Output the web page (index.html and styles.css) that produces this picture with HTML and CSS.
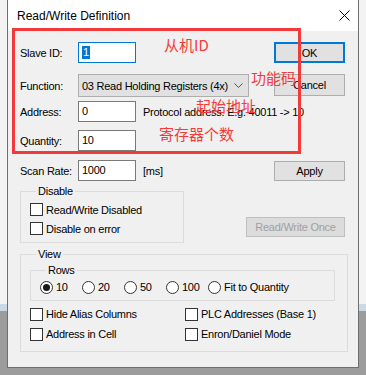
FILE: index.html
```html
<!DOCTYPE html>
<html lang="en">

<head>
    <meta charset="UTF-8">
    <title>Read/Write Definition</title>
    <link rel="stylesheet" href="styles.css">
</head>

<body>

    <div class="dialog">
        <!-- title bar -->
        <div class="titlebar">
            <span class="title">Read/Write Definition</span>
            <svg class="close" width="11" height="11" viewBox="0 0 11 11">
                <path d="M0.5 0.5 L10.5 10.5 M10.5 0.5 L0.5 10.5" stroke="#000" stroke-width="1" fill="none" />
            </svg>
        </div>

        <div class="dialog-body">
            <div class="row row-slave">
                <span class="lbl">Slave ID:</span>
                <div class="field focus"><span class="selected">1</span></div>
                <div class="spacer"></div>
                <button class="btn btn-default">OK</button>
            </div>

            <div class="row row-func">
                <span class="lbl">Function:</span>
                <div class="select">
                    <span>03 Read Holding Registers (4x)</span>
                    <svg class="chevron" width="9" height="6" viewBox="0 0 9 6">
                        <path d="M0.5 0.5 L4.5 4.5 L8.5 0.5" stroke="#555" stroke-width="1" fill="none" />
                    </svg>
                </div>
                <div class="spacer"></div>
                <button class="btn btn-cancel">Cancel</button>
            </div>

            <div class="row row-addr">
                <span class="lbl">Address:</span>
                <div class="field">0</div>
                <span class="hint">Protocol address. E.g. 40011 -&gt; 10</span>
            </div>

            <div class="row row-qty">
                <span class="lbl">Quantity:</span>
                <div class="field">10</div>
            </div>

            <div class="row row-scan">
                <span class="lbl">Scan Rate:</span>
                <div class="field">1000</div>
                <span class="hint">[ms]</span>
                <div class="spacer"></div>
                <button class="btn btn-apply">Apply</button>
            </div>

            <div class="row row-disable">
                <fieldset class="group group-disable">
                    <legend>Disable</legend>
                    <div class="check"><span class="box"></span>Read/Write Disabled</div>
                    <div class="check"><span class="box"></span>Disable on error</div>
                </fieldset>
                <div class="spacer"></div>
                <button class="btn btn-once" disabled>Read/Write Once</button>
            </div>

            <fieldset class="group group-view">
                <legend>View</legend>
                <fieldset class="group group-rows">
                    <legend>Rows</legend>
                    <div class="radios">
                        <div class="radio on"><span class="dot"></span>10</div>
                        <div class="radio"><span class="dot"></span>20</div>
                        <div class="radio"><span class="dot"></span>50</div>
                        <div class="radio"><span class="dot"></span>100</div>
                        <div class="radio"><span class="dot"></span>Fit to Quantity</div>
                    </div>
                </fieldset>
                <div class="options">
                    <div class="check"><span class="box"></span>Hide Alias Columns</div>
                    <div class="check"><span class="box"></span>PLC Addresses (Base 1)</div>
                    <div class="check"><span class="box"></span>Address in Cell</div>
                    <div class="check"><span class="box"></span>Enron/Daniel Mode</div>
                </div>
            </fieldset>
        </div>

        <!-- red annotations drawn over the dialog -->
        <div class="mark"></div>
        <span class="note note-id">从机ID</span>
        <span class="note note-func">功能码</span>
        <span class="note note-addr">起始地址</span>
        <span class="note note-qty">寄存器个数</span>
    </div>

</body>

</html>
```

FILE: styles.css
```css
body {
    margin: 0;
    width: 366px;
    height: 375px;
    overflow: hidden;
    font-family: "Liberation Sans", Arial, sans-serif;
    font-size: 11px;
    letter-spacing: -0.25px;
    color: #000;
    background: linear-gradient(#f3f3f3 0 304px, #cbd8e6 304px 311px, #9c9c9c 311px);
}

/* dialog window */
.dialog {
    position: relative;
    box-sizing: border-box;
    width: 352px;
    height: 368px;
    margin-left: 7px;
    background: #f0f0f0;
    border: 1px solid #6f6f6f;
    border-top: none;
}

.titlebar {
    display: flex;
    align-items: center;
    height: 31px;
    padding: 0 7px 0 9px;
    background: #fff;
}

.title {
    font-size: 12px;
    letter-spacing: 0;
    flex: 1;
    padding-top: 1px;
}

.close {
    display: block;
    margin-right: 1px;
}

.dialog-body {
    padding: 11px 13px 0 12px;
}

/* form rows */
.row {
    display: flex;
    align-items: center;
}

.spacer {
    flex: 1;
}

.lbl {
    width: 58px;
}

.row-slave {
    height: 21px;
}

.row-func {
    height: 23px;
    margin-top: 11px;
}

.row-addr {
    height: 21px;
    margin-top: 4px;
}

.row-qty {
    height: 21px;
    margin-top: 8px;
}

.row-scan {
    height: 21px;
    margin-top: 9px;
}

.field {
    box-sizing: border-box;
    width: 58px;
    height: 21px;
    padding: 3px 0 0 3px;
    background: #fff;
    border: 1px solid #7a7a7a;
    line-height: 13px;
}

.field.focus {
    border-color: #0078d7;
}

.selected {
    display: inline-block;
    padding: 0 1px;
    background: #0078d7;
    color: #fff;
}

.hint {
    margin-left: 7px;
    white-space: nowrap;
}

.select {
    box-sizing: border-box;
    display: flex;
    align-items: center;
    justify-content: space-between;
    width: 171px;
    height: 23px;
    padding: 0 5px 0 3px;
    white-space: nowrap;
    background: #e1e1e1;
    border: 1px solid #adadad;
}

.chevron {
    display: block;
    flex-shrink: 0;
}

/* buttons */
.btn {
    box-sizing: border-box;
    width: 71px;
    height: 21px;
    padding: 0;
    font: inherit;
    letter-spacing: inherit;
    color: #000;
    background: #e1e1e1;
    border: 1px solid #adadad;
}

.btn-default {
    border: 2px solid #0078d7;
}

.btn-cancel {
    height: 22px;
    align-self: flex-start;
}

.btn-apply {
    height: 20px;
}

.btn-once {
    width: 99px;
    height: 20px;
    align-self: flex-end;
    margin-bottom: 6px;
    color: #a0a0a0;
    background: #dcdcdc;
    border-color: #bfbfbf;
}

/* group boxes */
.group {
    margin: 0;
    padding: 0;
    border: 1px solid #dcdcdc;
}

.group legend {
    margin-left: 6px;
    padding: 0 2px;
    line-height: 13px;
}

.row-disable {
    margin-top: 4px;
}

.group-disable {
    width: 164px;
    box-sizing: border-box;
    padding: 2px 0 4px 9px;
}

.group-view {
    box-sizing: border-box;
    width: 328px;
    margin-top: 5px;
    padding: 3px 0 7px 9px;
}

.group-rows {
    box-sizing: border-box;
    width: 305px;
    padding: 1px 0 4px 9px;
}

.check {
    display: flex;
    align-items: center;
    height: 19px;
    white-space: nowrap;
}

.box {
    box-sizing: border-box;
    width: 13px;
    height: 13px;
    margin-right: 3px;
    background: #fff;
    border: 1px solid #333;
}

.radios {
    display: flex;
    height: 18px;
    align-items: center;
}

.radio {
    display: flex;
    align-items: center;
    width: 42px;
}

.radio:last-child {
    width: auto;
}

.dot {
    box-sizing: border-box;
    display: flex;
    align-items: center;
    justify-content: center;
    width: 13px;
    height: 13px;
    margin-right: 3px;
    background: #fff;
    border: 1px solid #333;
    border-radius: 50%;
}

.radio.on .dot::after {
    content: "";
    width: 7px;
    height: 7px;
    border-radius: 50%;
    background: #1a1a1a;
}

.options {
    display: grid;
    grid-template-columns: 155px 1fr;
    margin-top: 3px;
}

.options .check {
    height: 20px;
}

/* red annotations */
.mark {
    position: absolute;
    left: 4px;
    top: 28px;
    width: 289px;
    height: 126px;
    box-sizing: border-box;
    border: 3px solid #f23a3a;
}

.note {
    position: absolute;
    font-family: "Noto Sans CJK SC", "Liberation Sans", sans-serif;
    font-size: 15px;
    line-height: 15px;
    letter-spacing: 0;
    color: #f53a3a;
}

.note-id {
    left: 156px;
    top: 37px;
}

.note-func {
    left: 243px;
    top: 70px;
}

.note-addr {
    left: 188px;
    top: 98px;
}

.note-qty {
    left: 151px;
    top: 126px;
}
```
